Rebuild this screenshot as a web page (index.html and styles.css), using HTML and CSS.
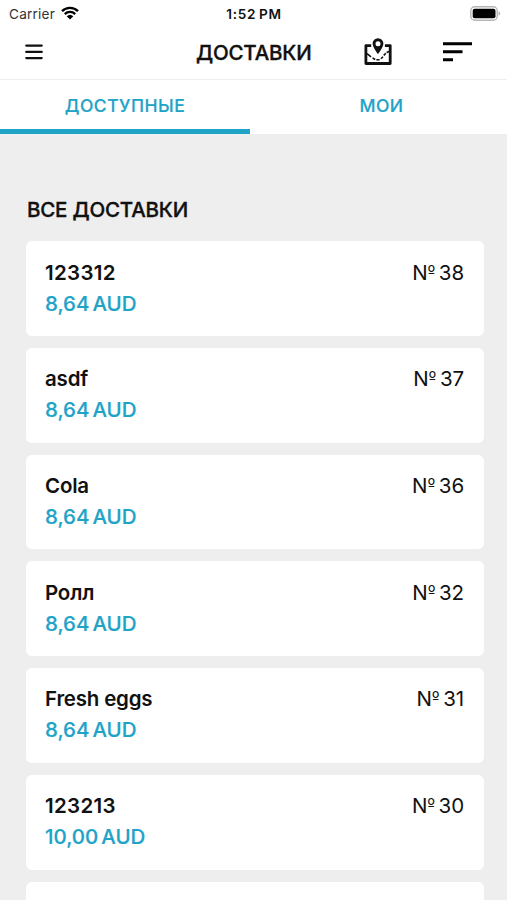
FILE: index.html
```html
<!DOCTYPE html>
<html lang="ru">
<head>
    <meta charset="UTF-8">
    <meta name="viewport" content="width=device-width, initial-scale=1.0">
    <title>Доставки</title>
    <link rel="stylesheet" href="styles.css">
</head>
<body>
    <div class="status-bar">
        <div class="carrier">
            <span>Carrier</span>
            <svg class="wifi" width="18" height="14" viewBox="0 0 18 14">
                <path d="M1 5.2a11.5 11.5 0 0 1 16 0M3.8 8.1a7.4 7.4 0 0 1 10.4 0" fill="none" stroke="#000" stroke-width="2.3"/>
                <path d="M5.7 10.2a4.8 4.8 0 0 1 6.6 0L9 13.6z"/>
            </svg>
        </div>
        <span class="time">1:52 PM</span>
        <svg class="battery" width="31" height="15" viewBox="0 0 31 15">
            <rect x="0.8" y="0.8" width="26.4" height="13.4" rx="4" fill="#fff" stroke="#b5b5b5" stroke-width="1.4"/>
            <rect x="2.7" y="2.7" width="22.8" height="9.6" rx="2"/>
            <path d="M28.5 5.2q1.8 .8 1.8 2.3t-1.8 2.3z" fill="#b5b5b5"/>
        </svg>
    </div>

    <header class="header">
        <svg class="menu-icon" width="18" height="16" viewBox="0 0 18 16">
            <path d="M1.3 1.6h15.4M1.3 7.9h15.4M1.3 14.1h15.4" stroke="#111" stroke-width="2.3" stroke-linecap="round"/>
        </svg>
        <h1>ДОСТАВКИ</h1>
        <svg class="map-icon" width="28" height="28" viewBox="0 0 28 28">
            <path d="M7.2 7.6H1.9v17.9h24.3V7.6h-5.3" fill="none" stroke="#111" stroke-width="2.8" stroke-linejoin="round"/>
            <path d="M3 15.6l4 3.2M8.6 20l2.6 1.5M12.4 21.8h3.2M17 20.8l2-2M19.8 17.4l2-2.2M22.6 14.5l3-1.2" fill="none" stroke="#111" stroke-width="1.6"/>
            <path fill-rule="evenodd" d="M14 .2a5.4 5.4 0 0 1 5.4 5.4C19.4 9.5 14 16.2 14 16.2S8.6 9.5 8.6 5.6A5.4 5.4 0 0 1 14 .2zm0 3a2.5 2.5 0 1 0 0 5 2.5 2.5 0 0 0 0-5z" fill="#111"/>
        </svg>
        <svg class="sort-icon" width="29" height="20" viewBox="0 0 29 20">
            <path d="M0 1.8h29M0 9.8h19.5M0 17.8h10" stroke="#000" stroke-width="3"/>
        </svg>
    </header>

    <nav class="tabs">
        <a class="tab active">ДОСТУПНЫЕ</a>
        <a class="tab">МОИ</a>
    </nav>

    <main class="deliveries">
        <h2>ВСЕ ДОСТАВКИ</h2>

        <div class="card">
            <div class="info">
                <div class="name digits">123312</div>
                <div class="price">8,64 AUD</div>
            </div>
            <div class="number">N<span class="ord">º</span> 38</div>
        </div>
        <div class="card">
            <div class="info">
                <div class="name">asdf</div>
                <div class="price">8,64 AUD</div>
            </div>
            <div class="number">N<span class="ord">º</span> 37</div>
        </div>
        <div class="card">
            <div class="info">
                <div class="name">Cola</div>
                <div class="price">8,64 AUD</div>
            </div>
            <div class="number">N<span class="ord">º</span> 36</div>
        </div>
        <div class="card">
            <div class="info">
                <div class="name">Ролл</div>
                <div class="price">8,64 AUD</div>
            </div>
            <div class="number">N<span class="ord">º</span> 32</div>
        </div>
        <div class="card">
            <div class="info">
                <div class="name">Fresh eggs</div>
                <div class="price">8,64 AUD</div>
            </div>
            <div class="number">N<span class="ord">º</span> 31</div>
        </div>
        <div class="card">
            <div class="info">
                <div class="name digits">123213</div>
                <div class="price">10,00 AUD</div>
            </div>
            <div class="number">N<span class="ord">º</span> 30</div>
        </div>
        <div class="card"></div>
    </main>
</body>
</html>
```

FILE: styles.css
```css
* {
    box-sizing: border-box;
}

body {
    font-family: Inter, Roboto, sans-serif;
    margin: 0;
    height: 100vh;
    overflow: hidden;
    display: flex;
    flex-direction: column;
    background: #eee;
    color: #111;
}

svg {
    display: block;
}

.status-bar {
    display: grid;
    grid-template-columns: 1fr auto 1fr;
    align-items: center;
    height: 27px;
    flex-shrink: 0;
    padding: 0 6px 0 9px;
    background: #fff;
    font-size: 13.6px;
}

.carrier {
    display: flex;
    align-items: center;
    gap: 6px;
    color: #333;
    letter-spacing: 0.2px;
}

.wifi {
    margin-top: -2px;
}

.time {
    font-weight: 600;
    letter-spacing: 0.65px;
    word-spacing: -1px;
    margin-left: -2px;
}

.battery {
    justify-self: end;
    margin-top: -1px;
}

.header {
    display: flex;
    align-items: center;
    height: 53px;
    flex-shrink: 0;
    padding: 0 35px 3px 25px;
    background: #fff;
    border-bottom: 1px solid #eee;
}

h1 {
    margin: 1px 0 0 153px;
    width: 116px;
    font-size: 20.5px;
    font-weight: 500;
    letter-spacing: -0.2px;
    white-space: nowrap;
    -webkit-text-stroke: 0.35px #111;
}

.map-icon {
    margin-left: 52px;
}

.sort-icon {
    margin-left: auto;
}

.tabs {
    display: flex;
    height: 54px;
    flex-shrink: 0;
    background: #fff;
}

.tab {
    width: 257px;
    padding: 14px 0 0 6px;
    text-align: center;
    font-size: 17.5px;
    line-height: 24px;
    font-weight: 500;
    letter-spacing: 0.5px;
    color: #1fa3c7;
    -webkit-text-stroke: 0.2px #1fa3c7;
}

.tab.active {
    width: 250px;
    padding-left: 0;
    border-bottom: 5px solid #1fa3c7;
}

.deliveries {
    display: flex;
    flex-direction: column;
    gap: 12px;
    min-height: 0;
    overflow: hidden;
    padding: 63px 23px 0 26px;
}

h2 {
    margin: 0 0 6.4px 1px;
    font-size: 20.5px;
    line-height: 26px;
    font-weight: 500;
    letter-spacing: -0.2px;
    -webkit-text-stroke: 0.35px #111;
}

.card {
    display: flex;
    justify-content: space-between;
    height: 94.7px;
    flex-shrink: 0;
    padding: 15.2px 20px 0 19px;
    background: #fff;
    border-radius: 6px;
    font-size: 20.5px;
    line-height: 31px;
}

.name {
    font-weight: 600;
    letter-spacing: -0.2px;
}

.name.digits {
    letter-spacing: 0.3px;
}

.price {
    font-weight: 500;
    word-spacing: -2.5px;
    color: #1fa3c7;
    -webkit-text-stroke: 0.2px #1fa3c7;
}

.number {
    word-spacing: -2px;
    letter-spacing: -0.1px;
}

/* Inter draws this sign without the bar */
.ord {
    font-family: "DejaVu Sans", sans-serif;
    font-size: 16.5px;
    line-height: 1;
    vertical-align: 2.5px;
}
```
